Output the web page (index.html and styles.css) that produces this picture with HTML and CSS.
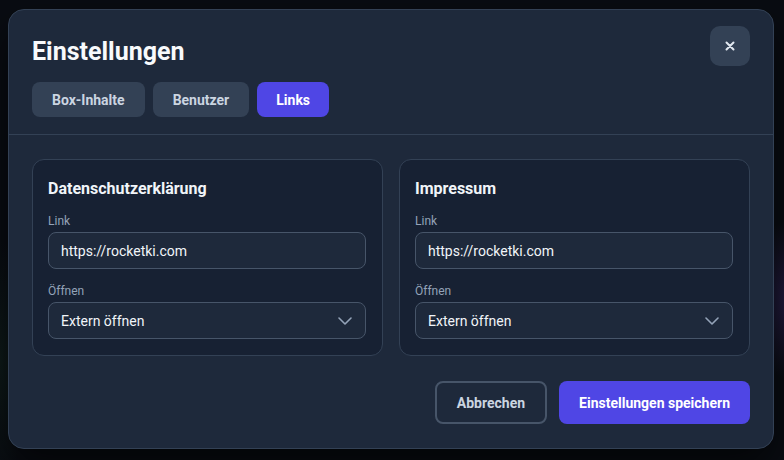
FILE: index.html
```html
<!DOCTYPE html>
<html lang="de">
<head>
    <meta charset="UTF-8">
    <meta name="viewport" content="width=device-width, initial-scale=1.0">
    <title>Einstellungen</title>
    <link rel="stylesheet" href="styles.css">
</head>
<body>
    <div class="modal">
        <!-- Kopfbereich mit Titel und Tabs -->
        <div class="modal-header">
            <div class="header-left">
                <h2 class="modal-title">Einstellungen</h2>
                <div class="tabs">
                    <button class="tab">Box-Inhalte</button>
                    <button class="tab">Benutzer</button>
                    <button class="tab active">Links</button>
                </div>
            </div>
            <button class="close-btn" aria-label="Schließen">
                <svg width="10" height="10" viewBox="0 0 10 10">
                    <path d="M1.5 1.5 L8.5 8.5 M8.5 1.5 L1.5 8.5" stroke="#e2e8f0" stroke-width="2" stroke-linecap="round"/>
                </svg>
            </button>
        </div>

        <!-- Link-Karten -->
        <div class="modal-body">
            <div class="link-card">
                <div class="card-title">Datenschutzerklärung</div>
                <div class="field">
                    <label class="field-label">Link</label>
                    <div class="field-input">https://rocketki.com</div>
                </div>
                <div class="field">
                    <label class="field-label">Öffnen</label>
                    <div class="field-input field-select">
                        <span>Extern öffnen</span>
                        <svg width="14" height="8" viewBox="0 0 14 8">
                            <path d="M1 1 L7 7 L13 1" fill="none" stroke="#94a3b8" stroke-width="1.6" stroke-linecap="round" stroke-linejoin="round"/>
                        </svg>
                    </div>
                </div>
            </div>

            <div class="link-card">
                <div class="card-title">Impressum</div>
                <div class="field">
                    <label class="field-label">Link</label>
                    <div class="field-input">https://rocketki.com</div>
                </div>
                <div class="field">
                    <label class="field-label">Öffnen</label>
                    <div class="field-input field-select">
                        <span>Extern öffnen</span>
                        <svg width="14" height="8" viewBox="0 0 14 8">
                            <path d="M1 1 L7 7 L13 1" fill="none" stroke="#94a3b8" stroke-width="1.6" stroke-linecap="round" stroke-linejoin="round"/>
                        </svg>
                    </div>
                </div>
            </div>
        </div>

        <!-- Aktionen -->
        <div class="modal-footer">
            <button class="btn btn-cancel">Abbrechen</button>
            <button class="btn btn-save">Einstellungen speichern</button>
        </div>
    </div>
</body>
</html>
```

FILE: styles.css
```css
body, html {
    margin: 0;
    padding: 0;
    width: 100%;
    height: 100%;
}

body {
    box-sizing: border-box;
    padding: 9px 10px 11px 8px;
    font-family: Roboto, "Noto Sans", sans-serif;
    background:
        radial-gradient(ellipse 40px 80px at 790px 300px, rgba(88, 60, 160, 0.35), transparent),
        radial-gradient(ellipse 30px 120px at 0px 360px, rgba(30, 70, 50, 0.25), transparent),
        #090c12;
    overflow: hidden;
}

.modal {
    background-color: #1e293b;
    border: 1px solid #334155;
    border-radius: 16px;
    height: 440px;
    box-sizing: border-box;
    box-shadow: 0 20px 40px rgba(0, 0, 0, 0.6);
}

.modal-header {
    display: flex;
    justify-content: space-between;
    align-items: flex-start;
    padding: 16px 23px 17px 23px;
    border-bottom: 1px solid #334155;
}

.modal-title {
    margin: 10px 0 14px;
    font-size: 25px;
    line-height: 32px;
    font-weight: 700;
    color: #f8fafc;
}

.tabs {
    display: flex;
    gap: 8px;
}

.tab {
    height: 35px;
    padding: 0 20px;
    border: none;
    border-radius: 8px;
    background-color: #334155;
    color: #cbd5e1;
    font-family: inherit;
    font-size: 14px;
    font-weight: 700;
    cursor: pointer;
}

.tab.active {
    background-color: #4f46e5;
    color: #fff;
    padding: 0 19px;
}

.close-btn {
    width: 40px;
    height: 40px;
    border: none;
    border-radius: 10px;
    background-color: #334155;
    display: flex;
    align-items: center;
    justify-content: center;
    cursor: pointer;
}

.modal-body {
    display: grid;
    grid-template-columns: 1fr 1fr;
    gap: 16px;
    padding: 24px 23px 0;
}

.link-card {
    background-color: #172133;
    border: 1px solid #334155;
    border-radius: 12px;
    padding: 17px 16px 16px 15px;
}

.card-title {
    font-size: 16px;
    line-height: 24px;
    font-weight: 700;
    color: #f1f5f9;
    margin-bottom: 12px;
}

.field + .field {
    margin-top: 14px;
}

.field-label {
    display: block;
    font-size: 12px;
    line-height: 16px;
    color: #94a3b8;
    margin-bottom: 3px;
}

.field-input {
    box-sizing: border-box;
    height: 37px;
    padding: 0 12px;
    border: 1px solid #475569;
    border-radius: 8px;
    background-color: #1e293b;
    color: #f1f5f9;
    font-size: 14px;
    display: flex;
    align-items: center;
}

.field-select {
    justify-content: space-between;
    padding-right: 13px;
}

.modal-footer {
    display: flex;
    justify-content: flex-end;
    gap: 12px;
    padding: 25px 23px 24px;
}

.btn {
    height: 43px;
    padding: 0 20px;
    border-radius: 8px;
    font-family: inherit;
    font-size: 14px;
    font-weight: 700;
    cursor: pointer;
}

.btn-cancel {
    background: transparent;
    border: 2px solid #475569;
    color: #cbd5e1;
}

.btn-save {
    background-color: #4f46e5;
    border: none;
    color: #fff;
}
```
